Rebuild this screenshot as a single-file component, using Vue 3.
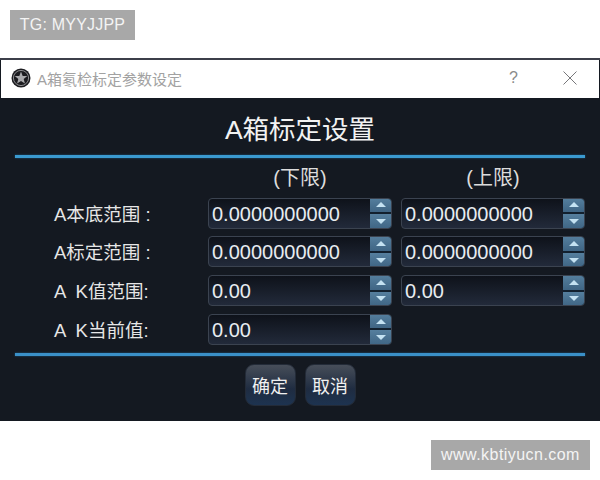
<script setup>
const rows = [
  { label: 'A本底范围 :', values: ['0.0000000000', '0.0000000000'] },
  { label: 'A标定范围 :', values: ['0.0000000000', '0.0000000000'] },
  { label: 'A  K值范围:', values: ['0.00', '0.00'] },
  { label: 'A  K当前值:', values: ['0.00'] },
]
</script>

<template>
  <div class="page">
    <div class="tag tag-left">TG: MYYJJPP</div>
    <div class="window">
      <div class="titlebar">
        <svg class="logo" viewBox="0 0 20 20" aria-hidden="true">
          <circle cx="10" cy="10" r="9.5" fill="#1c1c20" />
          <circle cx="10" cy="10" r="7.6" fill="none" stroke="#8d8d90" stroke-width="1" />
          <polygon points="10,3.6 11.7,8 16.2,8.1 12.7,11 13.9,15.5 10,13 6.1,15.5 7.3,11 3.8,8.1 8.3,8" fill="#a9a9ac" />
        </svg>
        <span class="wintitle">A箱氡检标定参数设定</span>
        <span class="help">?</span>
        <svg class="close" viewBox="0 0 14 14" aria-hidden="true">
          <path d="M0.5 0.5 L13.5 13.5 M13.5 0.5 L0.5 13.5" stroke="#77777a" stroke-width="1" fill="none" />
        </svg>
      </div>
      <div class="body">
        <h1 class="heading">A箱标定设置</h1>
        <div class="rule"></div>
        <div class="grid">
          <span></span>
          <span class="col-head">(下限)</span>
          <span class="col-head">(上限)</span>
          <template v-for="row in rows" :key="row.label">
            <span class="label">{{ row.label }}</span>
            <div v-for="(v, i) in row.values" :key="i" class="spin">
              <span class="value">{{ v }}</span>
              <div class="arrows">
                <div class="arrow"><i class="up"></i></div>
                <div class="arrow"><i class="down"></i></div>
              </div>
            </div>
          </template>
        </div>
        <div class="rule rule-low"></div>
        <div class="actions">
          <button class="btn">确定</button>
          <button class="btn">取消</button>
        </div>
      </div>
    </div>
    <div class="tag tag-right">www.kbtiyucn.com</div>
  </div>
</template>

<style scoped>
.page {
  width: 600px;
  height: 480px;
  background: #fff;
  display: flex;
  flex-direction: column;
  overflow: hidden;
  font-family: "Liberation Sans", "Noto Sans CJK SC", sans-serif;
}
.tag {
  background: #a8a8a8;
  color: #f4f4f4;
  height: 30px;
  line-height: 30px;
  font-size: 16px;
  text-align: center;
}
.tag-left {
  width: 125px;
  margin: 10px 0 18px 10px;
  letter-spacing: 0.2px;
}
.tag-right {
  width: 159px;
  margin: 19px 0 0 431px;
  letter-spacing: 0.45px;
}
.window {
  width: 600px;
  height: 363px;
  box-sizing: border-box;
  border-top: 2px solid #3c3f4a;
  background: #141921;
  display: flex;
  flex-direction: column;
  flex: none;
}
.titlebar {
  box-sizing: border-box;
  height: 38px;
  padding-bottom: 2px;
  margin-left: 1px;
  margin-right: 1px;
  background: #fff;
  display: flex;
  align-items: center;
  flex: none;
}
.logo {
  width: 20px;
  height: 20px;
  margin-left: 10px;
  flex: none;
}
.wintitle {
  margin-left: 6px;
  font-size: 15px;
  color: #a2a2a2;
  flex: 1;
}
.help {
  font-size: 16px;
  color: #8a8a8a;
  margin-right: 45px;
}
.close {
  width: 14px;
  height: 14px;
  margin-right: 22px;
  flex: none;
}
.body {
  flex: 1;
  padding: 0 15px;
  background: #141921;
  display: flex;
  flex-direction: column;
}
.heading {
  margin: 0;
  height: 57px;
  line-height: 65px;
  font-size: 26.5px;
  font-weight: 400;
  color: #f2f2f2;
  text-align: center;
}
.rule {
  height: 3px;
  background: #3a9ad0;
  box-shadow: 0 0 2px #1f5f88;
  flex: none;
}
.grid {
  margin-top: 8px;
  display: grid;
  grid-template-columns: repeat(3, 184px);
  grid-template-rows: 24px;
  grid-auto-rows: 31px;
  column-gap: 9px;
  row-gap: 7.7px;
}
.col-head {
  font-size: 20px;
  line-height: 24px;
  color: #dcdcdc;
  text-align: center;
}
.label {
  grid-column: 1;
  padding-left: 39px;
  font-size: 18.5px;
  line-height: 33px;
  color: #e6e6e6;
  white-space: pre;
}
.spin {
  display: flex;
  box-sizing: border-box;
  border: 1px solid #3b4350;
  border-radius: 4px;
  background: linear-gradient(#0e121a, #222a3a);
  overflow: hidden;
}
.value {
  flex: 1;
  padding-left: 3px;
  font-size: 20px;
  line-height: 31px;
  color: #e8ecf0;
}
.arrows {
  width: 22px;
  margin: -1px -1px -1px 0;
  display: flex;
  flex-direction: column;
  gap: 2px;
  background: #12202e;
}
.arrow {
  flex: 1;
  display: flex;
  align-items: center;
  justify-content: center;
  background: linear-gradient(#557f9e, #3f6584);
}
.up,
.down {
  width: 0;
  height: 0;
  border-left: 5px solid transparent;
  border-right: 5px solid transparent;
}
.up {
  border-bottom: 5px solid #c4e2f2;
}
.down {
  border-top: 5px solid #c4e2f2;
}
.rule-low {
  margin-top: 8px;
  background: #3a90c8;
}
.actions {
  margin-top: 8px;
  display: flex;
  justify-content: center;
  gap: 9px;
}
.btn {
  width: 51px;
  height: 42px;
  padding: 0;
  border: 1px solid #232b38;
  border-radius: 9px;
  background: linear-gradient(#474e59, #1f2c41 60%, #1d3350);
  color: #f0f0f0;
  font-size: 18px;
  font-family: "Noto Sans CJK SC", sans-serif;
}
</style>
